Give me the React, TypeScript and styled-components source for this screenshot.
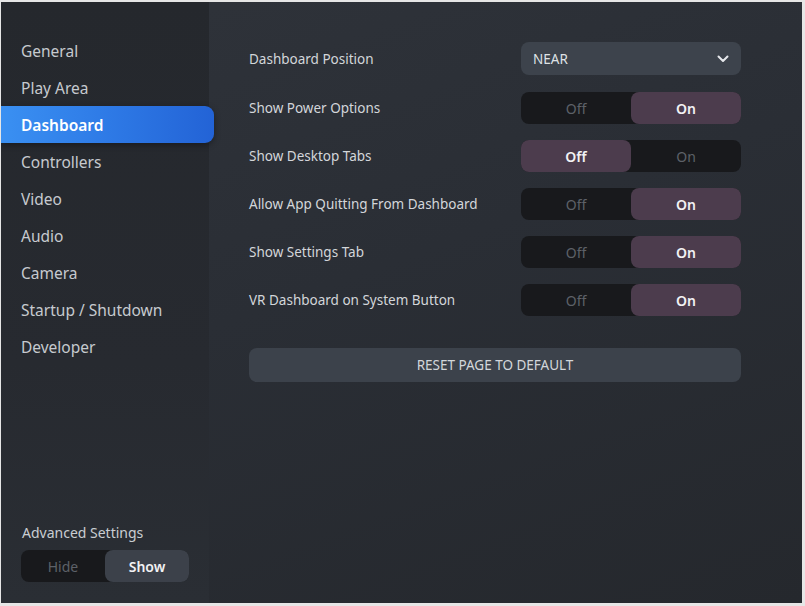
import React from "react";
import styled, { createGlobalStyle } from "styled-components";

const Global = createGlobalStyle`
  html, body { margin: 0; padding: 0; background: #e6e6e6; }
  body { font-family: "Noto Sans", "Open Sans", sans-serif; }
  * { box-sizing: border-box; }
`;

const Window = styled.div`
  margin: 2px 0 0 1px;
  width: 801px;
  height: 601px;
  display: flex;
  background: linear-gradient(160deg, #2f333a 0%, #2a2e35 45%, #25282d 100%);
  overflow: hidden;
`;

const Sidebar = styled.nav`
  width: 208px;
  flex: none;
  display: flex;
  flex-direction: column;
  padding-top: 30px;
  padding-bottom: 21px;
  background: linear-gradient(180deg, #25282d 0%, #272a30 60%, #2a2e34 100%);
  position: relative;
  z-index: 1;
`;

const NavList = styled.div`
  display: flex;
  flex-direction: column;
  flex: 1;
`;

const NavItem = styled.div<{ $active?: boolean }>`
  width: ${(p) => (p.$active ? "213px" : "208px")};
  height: 37px;
  display: flex;
  align-items: center;
  padding-left: 20px;
  font-size: 15.5px;
  color: ${(p) => (p.$active ? "#ffffff" : "#c6cacf")};
  font-weight: ${(p) => (p.$active ? 600 : 400)};
  border-radius: 0 9px 9px 0;
  background: ${(p) =>
    p.$active ? "linear-gradient(90deg, #3a90f2 0%, #2e7ae6 50%, #2363d6 100%)" : "transparent"};
  box-shadow: ${(p) => (p.$active ? "0 2px 6px rgba(0,0,0,0.35)" : "none")};
`;

const AdvLabel = styled.div`
  padding-left: 21px;
  font-size: 14px;
  color: #c9cdd2;
  margin-bottom: 8px;
`;

const SmallToggle = styled.div`
  margin-left: 20px;
  width: 168px;
  height: 32px;
  display: flex;
  background: #18191c;
  border-radius: 8px;
`;

const Half = styled.div<{ $active?: boolean; $tone?: "purple" | "grey" }>`
  flex: 1;
  display: flex;
  align-items: center;
  justify-content: center;
  border-radius: 8px;
  font-size: 14px;
  font-weight: ${(p) => (p.$active ? 600 : 400)};
  color: ${(p) => (p.$active ? "#f2f2f4" : "#5d6168")};
  background: ${(p) =>
    p.$active ? (p.$tone === "grey" ? "#3c414a" : "#4c3c4d") : "transparent"};
`;

const Main = styled.main`
  flex: 1;
  padding: 40px 61px 0 40px;
  display: flex;
  flex-direction: column;
`;

const Row = styled.div`
  height: 48px;
  display: flex;
  align-items: center;
  justify-content: space-between;
`;

const FirstRow = styled(Row)`
  height: 33px;
  margin-bottom: 9px;
`;

const Label = styled.div`
  font-size: 13.5px;
  color: #d3d6da;
`;

const Select = styled.div`
  width: 220px;
  height: 33px;
  border-radius: 8px;
  background: #3d434c;
  display: flex;
  align-items: center;
  justify-content: space-between;
  padding: 0 12px;
  font-size: 13.5px;
  color: #dfe2e6;
`;

const Toggle = styled.div`
  width: 220px;
  height: 32px;
  display: flex;
  background: #18191c;
  border-radius: 8px;
`;

const ResetButton = styled.div`
  margin-top: 24px;
  height: 34px;
  border-radius: 8px;
  background: #3c424b;
  display: flex;
  align-items: center;
  justify-content: center;
  font-size: 13.5px;
  color: #d3d7db;
`;

const Spacer = styled.div`
  flex: 1;
`;

const nav = [
  "General",
  "Play Area",
  "Dashboard",
  "Controllers",
  "Video",
  "Audio",
  "Camera",
  "Startup / Shutdown",
  "Developer",
];

const toggles: { label: string; on: boolean }[] = [
  { label: "Show Power Options", on: true },
  { label: "Show Desktop Tabs", on: false },
  { label: "Allow App Quitting From Dashboard", on: true },
  { label: "Show Settings Tab", on: true },
  { label: "VR Dashboard on System Button", on: true },
];

export default function App() {
  return (
    <>
      <Global />
      <Window>
        <Sidebar>
          <NavList>
            {nav.map((n) => (
              <NavItem key={n} $active={n === "Dashboard"}>
                {n}
              </NavItem>
            ))}
            <Spacer />
          </NavList>
          <AdvLabel>Advanced Settings</AdvLabel>
          <SmallToggle>
            <Half>Hide</Half>
            <Half $active $tone="grey">
              Show
            </Half>
          </SmallToggle>
        </Sidebar>
        <Main>
          <FirstRow>
            <Label>Dashboard Position</Label>
            <Select>
              <span>NEAR</span>
              <svg width="12" height="8" viewBox="0 0 12 8">
                <path d="M1.5 1.5 L6 6 L10.5 1.5" fill="none" stroke="#e6e8ec" strokeWidth="2" strokeLinecap="round" strokeLinejoin="round" />
              </svg>
            </Select>
          </FirstRow>
          {toggles.map((t) => (
            <Row key={t.label}>
              <Label>{t.label}</Label>
              <Toggle>
                <Half $active={!t.on}>Off</Half>
                <Half $active={t.on}>On</Half>
              </Toggle>
            </Row>
          ))}
          <ResetButton>RESET PAGE TO DEFAULT</ResetButton>
        </Main>
      </Window>
    </>
  );
}
